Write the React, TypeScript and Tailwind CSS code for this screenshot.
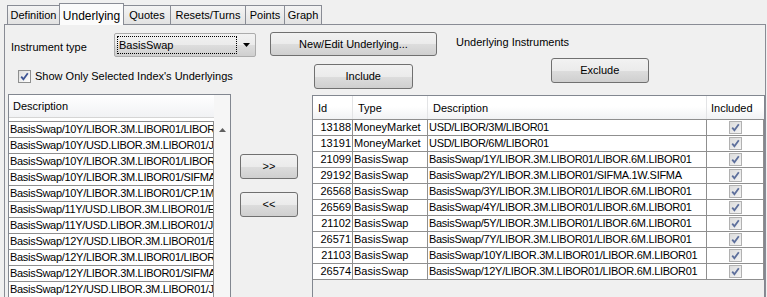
import React from "react";

const font = "font-['Liberation_Sans',Arial,sans-serif]";

const tabs = [
  { label: "Definition", w: "w-[53px]" },
  { label: "Underlying", w: "w-[65px]", active: true },
  { label: "Quotes", w: "w-[48px]" },
  { label: "Resets/Turns", w: "w-[76px]" },
  { label: "Points", w: "w-[40px]" },
  { label: "Graph", w: "w-[38px]" },
];

const available = [
  "BasisSwap/10Y/LIBOR.3M.LIBOR01/LIBOR.6M.LIBOR01",
  "BasisSwap/10Y/USD.LIBOR.3M.LIBOR01/JPY.LIBOR.3M.LIBOR01",
  "BasisSwap/10Y/LIBOR.3M.LIBOR01/LIBOR.1M.LIBOR01",
  "BasisSwap/10Y/LIBOR.3M.LIBOR01/SIFMA.1W.SIFMA",
  "BasisSwap/10Y/LIBOR.3M.LIBOR01/CP.1M.CP",
  "BasisSwap/11Y/USD.LIBOR.3M.LIBOR01/EUR.EURIBOR.6M",
  "BasisSwap/11Y/USD.LIBOR.3M.LIBOR01/JPY.LIBOR.6M",
  "BasisSwap/12Y/USD.LIBOR.3M.LIBOR01/EUR.EURIBOR.6M",
  "BasisSwap/12Y/LIBOR.3M.LIBOR01/LIBOR.6M.LIBOR01",
  "BasisSwap/12Y/LIBOR.3M.LIBOR01/SIFMA.1W.SIFMA",
  "BasisSwap/12Y/USD.LIBOR.3M.LIBOR01/JPY.LIBOR.6M",
];

const included = [
  { id: 13188, type: "MoneyMarket", desc: "USD/LIBOR/3M/LIBOR01" },
  { id: 13191, type: "MoneyMarket", desc: "USD/LIBOR/6M/LIBOR01" },
  { id: 21099, type: "BasisSwap", desc: "BasisSwap/1Y/LIBOR.3M.LIBOR01/LIBOR.6M.LIBOR01" },
  { id: 29192, type: "BasisSwap", desc: "BasisSwap/2Y/LIBOR.3M.LIBOR01/SIFMA.1W.SIFMA" },
  { id: 26568, type: "BasisSwap", desc: "BasisSwap/3Y/LIBOR.3M.LIBOR01/LIBOR.6M.LIBOR01" },
  { id: 26569, type: "BasisSwap", desc: "BasisSwap/4Y/LIBOR.3M.LIBOR01/LIBOR.6M.LIBOR01" },
  { id: 21102, type: "BasisSwap", desc: "BasisSwap/5Y/LIBOR.3M.LIBOR01/LIBOR.6M.LIBOR01" },
  { id: 26571, type: "BasisSwap", desc: "BasisSwap/7Y/LIBOR.3M.LIBOR01/LIBOR.6M.LIBOR01" },
  { id: 21103, type: "BasisSwap", desc: "BasisSwap/10Y/LIBOR.3M.LIBOR01/LIBOR.6M.LIBOR01" },
  { id: 26574, type: "BasisSwap", desc: "BasisSwap/12Y/LIBOR.3M.LIBOR01/LIBOR.6M.LIBOR01" },
];

function Button({ label, className }: { label: string; className: string }) {
  return (
    <div
      className={`flex items-center justify-center rounded-[3px] border border-[#707070] bg-[linear-gradient(#f2f2f2_0%,#ebebeb_50%,#dddddd_51%,#cfcfcf_100%)] text-[11px] text-black ${className}`}
    >
      {label}
    </div>
  );
}

function Check({ muted }: { muted?: boolean }) {
  return (
    <div
      className={`flex h-[13px] w-[13px] items-center justify-center border ${
        muted
          ? "border-[#b1b1b1] bg-[linear-gradient(135deg,#dcdcdc,#f4f4f4)]"
          : "border-[#8e8f8f] bg-[linear-gradient(135deg,#dedede,#ffffff)]"
      }`}
    >
      <svg width="9" height="9" viewBox="0 0 9 9">
        <path
          d="M1.2 4.6 L3.4 7.2 L7.8 1.2"
          fill="none"
          stroke={muted ? "#5d6f9c" : "#3d5494"}
          strokeWidth="1.8"
        />
      </svg>
    </div>
  );
}

export default function App() {
  return (
    <div className={`h-[297px] w-[767px] overflow-hidden bg-[#f0f0f0] text-[11px] text-black ${font}`}>
      {/* tab strip */}
      <div className="flex h-[24px] items-end pl-[8px]">
        {tabs.map((t) =>
          t.active ? (
            <div
              key={t.label}
              className={`relative z-10 -mb-px -ml-px flex h-[22px] items-start justify-center border border-b-0 border-[#898c95] bg-[#fbfbfb] pt-[3px] text-[12px] ${t.w}`}
            >
              {t.label}
            </div>
          ) : (
            <div
              key={t.label}
              className={`-ml-px flex h-[19px] items-center justify-center border border-b-0 border-[#898c95] bg-[linear-gradient(#f4f4f4,#e2e2e2)] pt-px ${t.w}`}
            >
              {t.label}
            </div>
          )
        )}
      </div>

      <div className="ml-[4px] h-[290px] w-[762px] border-x border-t border-[#898c95]">
        {/* first row */}
        <div className="flex h-[33px] items-start pt-[8px]">
          <div className="ml-[6px] mt-[6px] w-[103px]">Instrument type</div>
          <div className="relative flex h-[24px] w-[142px] items-center rounded-[2px] border border-[#acacac] bg-[linear-gradient(#f2f2f2_0%,#ebebeb_50%,#dddddd_51%,#cfcfcf_100%)]">
            <div className="ml-[2px] flex h-[18px] w-[120px] items-center border border-dotted border-black pl-px">
              BasisSwap
            </div>
            <svg className="ml-[6px]" width="7" height="4" viewBox="0 0 7 4">
              <path d="M0 0 H7 L3.5 4 Z" fill="#000" />
            </svg>
          </div>
          <Button label="New/Edit Underlying..." className="-mt-px ml-[14px] h-[24px] w-[167px]" />
          <div className="ml-[19px] mt-[1px]">Underlying Instruments</div>
        </div>

        {/* second row */}
        <div className="flex h-[36px] items-start">
          <div className="ml-[13px] mt-[10px] flex items-center gap-[4px]">
            <Check />
            <span>Show Only Selected Index&apos;s Underlyings</span>
          </div>
          <Button label="Include" className="ml-[81px] mt-[6px] h-[25px] w-[99px]" />
          <Button label="Exclude" className="ml-[138px] h-[25px] w-[98px]" />
        </div>

        {/* lists */}
        <div className="flex items-start">
          {/* available list */}
          <div className="ml-[3px] flex h-[230px] w-[223px] border border-[#828790] bg-white">
            <div className="w-[205px]">
              <div className="flex h-[23px] items-center border-b border-[#d5d5d5] bg-[linear-gradient(#ffffff,#f1f2f4)] pl-[4px]">
                Description
              </div>
              <div className="mt-[3px] border-t border-[#8f8f8f]">
                {available.map((a) => (
                  <div
                    key={a}
                    className="h-[16px] overflow-hidden whitespace-nowrap border-b border-r border-[#8f8f8f] pl-px leading-[15px] tracking-[-0.3px]"
                  >
                    {a}
                  </div>
                ))}
              </div>
            </div>
            <div className="flex w-[16px] justify-center bg-[#f6f6f6] pt-[33px]">
              <svg width="7" height="4" viewBox="0 0 7 4">
                <path d="M0 4 H7 L3.5 0 Z" fill="#606060" />
              </svg>
            </div>
          </div>

          {/* move buttons */}
          <div className="ml-[9px] mt-[60px] flex flex-col gap-[13px]">
            <Button label=">>" className="h-[25px] w-[58px]" />
            <Button label="<<" className="h-[25px] w-[58px]" />
          </div>

          {/* included table */}
          <div className="ml-[14px] mt-[1px] h-[230px] w-[453px] border border-[#828790] bg-[#f0f0f0]">
            <div className="flex h-[23px] bg-[linear-gradient(#ffffff_0%,#ffffff_45%,#f1f2f4_100%)]">
              <div className="w-[40px] border-r border-[#e3e4e6] pl-[5px] pt-[4px]">Id</div>
              <div className="w-[75px] border-r border-[#e3e4e6] pl-[5px] pt-[4px]">Type</div>
              <div className="w-[279px] border-r border-[#e3e4e6] pl-[5px] pt-[4px]">Description</div>
              <div className="w-[57px] pl-[4px] pt-[4px]">Included</div>
            </div>
            <div className="border-t border-[#8f8f8f]">
              {included.map((r) => (
                <div key={r.id} className="flex h-[16px] w-[451px] bg-white leading-[15px]">
                  <div className="w-[40px] border-b border-r border-[#8f8f8f] pr-px text-right">{r.id}</div>
                  <div className="w-[75px] border-b border-r border-[#8f8f8f] pl-px">{r.type}</div>
                  <div className="w-[279px] overflow-hidden whitespace-nowrap border-b border-r border-[#8f8f8f] pl-px tracking-[-0.3px]">
                    {r.desc}
                  </div>
                  <div className="flex w-[57px] items-center justify-center border-b border-r border-[#8f8f8f] pb-px pl-px">
                    <Check muted />
                  </div>
                </div>
              ))}
            </div>
          </div>
        </div>
      </div>
    </div>
  );
}
